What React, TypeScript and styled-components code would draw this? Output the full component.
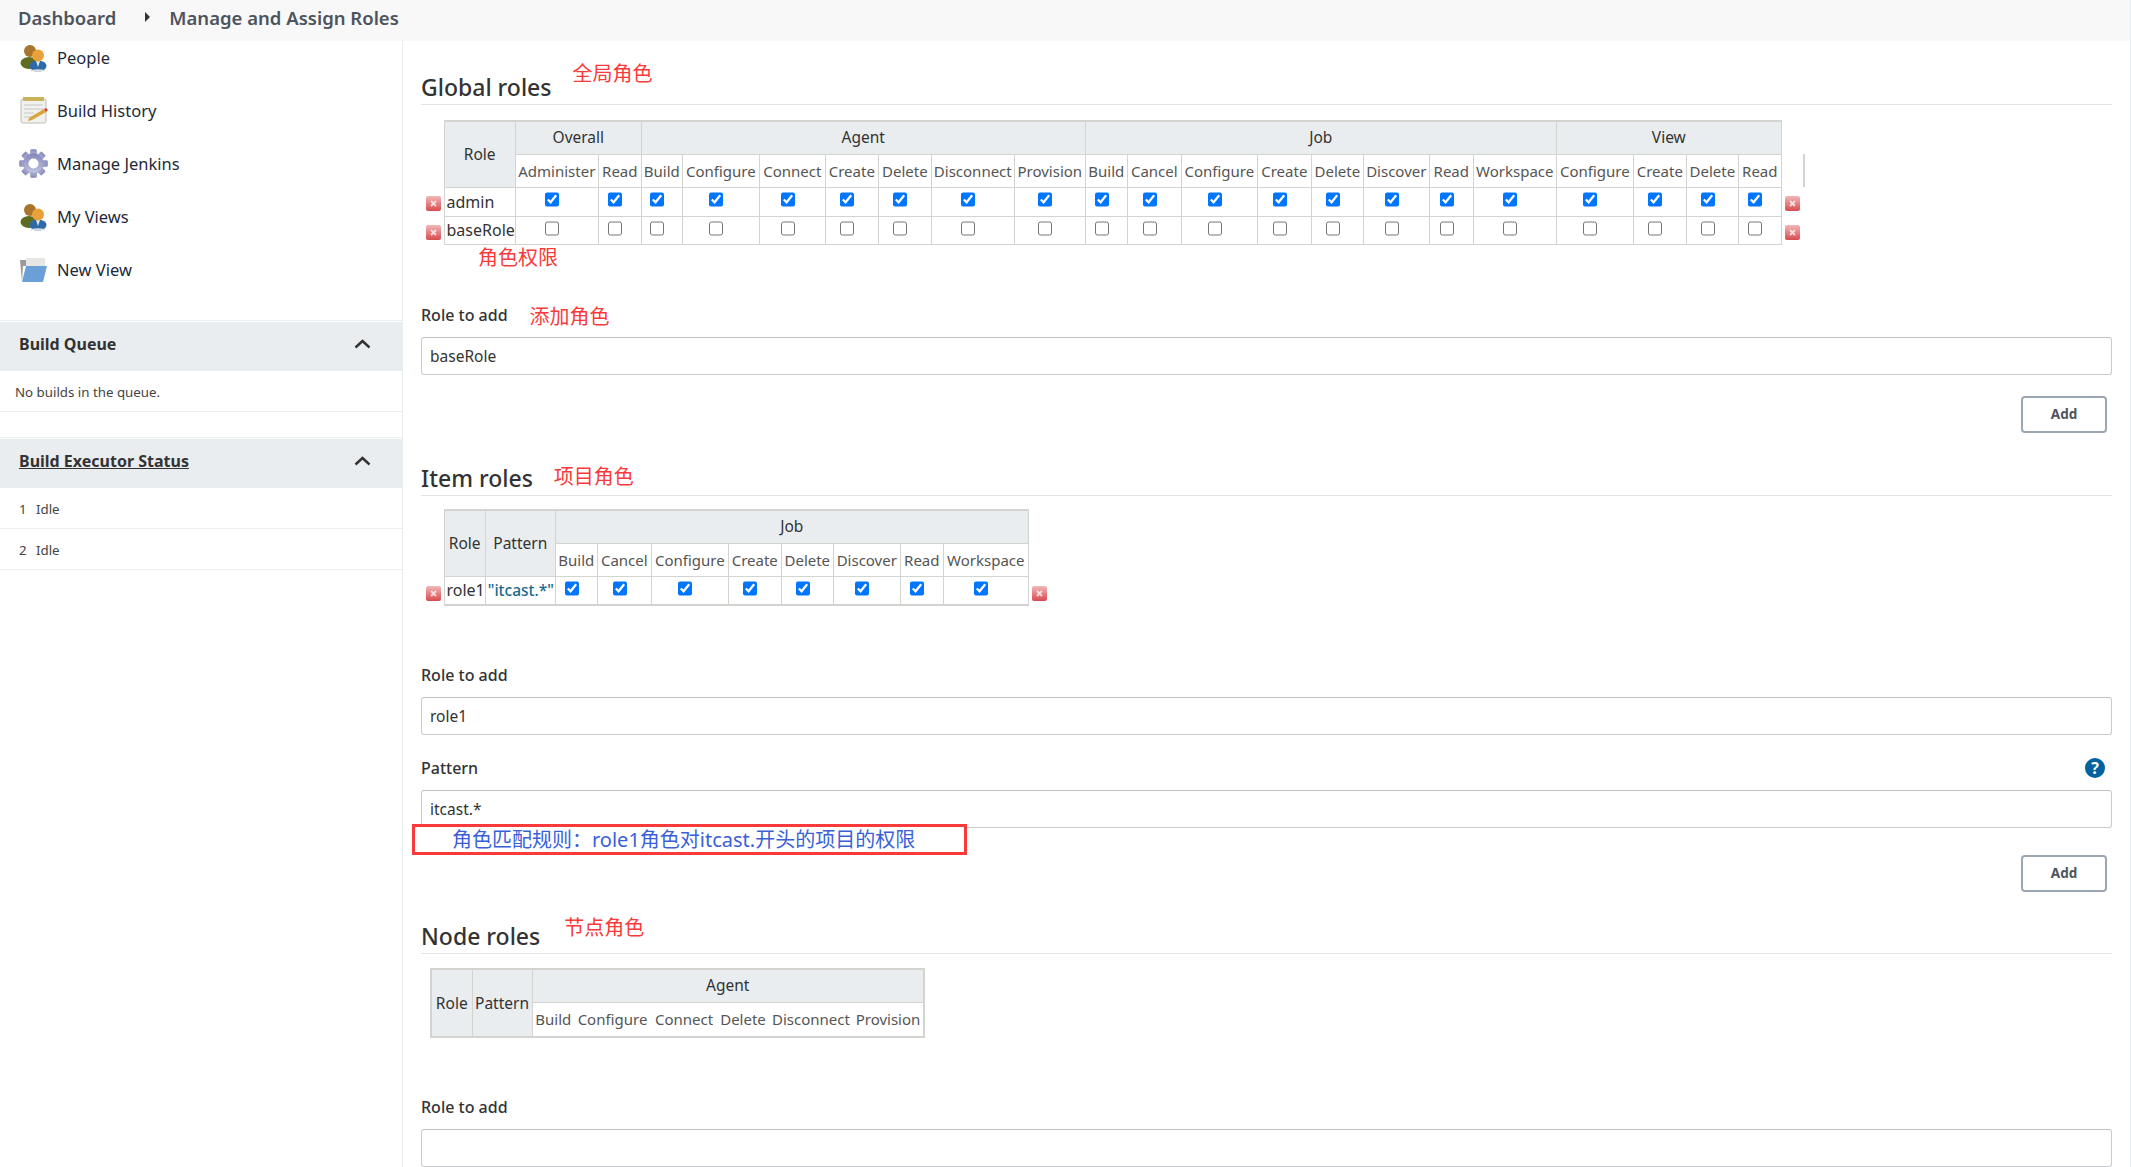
import React from "react";
import styled, { createGlobalStyle } from "styled-components";

const FONT = `"Noto Sans", "Noto Sans CJK SC", sans-serif`;
const LINE = "#d3d4cf";
const HEAD_BG = "#e9edf0";

const GlobalStyle = createGlobalStyle`
  html, body { margin: 0; padding: 0; background: #fff; }
  body { font-family: ${FONT}; color: #333; }
`;

const Page = styled.div`
  width: 2131px;
  height: 1167px;
  overflow: hidden;
  display: flex;
  flex-direction: column;
  border-right: 1px solid #e8eef0;
  box-sizing: border-box;
`;

const TopBar = styled.header`
  flex: none;
  position: relative;
  z-index: 2;
  height: 41px;
  background: #f8f8f8;
  display: flex;
  align-items: center;
  padding: 0 0 7px 18px;
  box-sizing: border-box;
  font-size: 18.5px;
  font-weight: 600;
  color: #4d545d;
`;

const Crumb = styled.span`
  white-space: nowrap;
`;

const CrumbArrow = styled.span`
  width: 0;
  height: 0;
  margin: 0 19px 0 29px;
  border-left: 5px solid #333;
  border-top: 5px solid transparent;
  border-bottom: 5px solid transparent;
`;

const Body = styled.div`
  flex: 1;
  display: flex;
  min-height: 0;
`;

const Sidebar = styled.aside`
  flex: none;
  width: 403px;
  box-sizing: border-box;
  border-right: 1px solid #e8eef0;
`;

const Tasks = styled.nav`
  margin-top: -10px;
  margin-bottom: 24px;
`;

const Task = styled.a`
  display: flex;
  align-items: center;
  gap: 9px;
  height: 53px;
  padding-left: 19px;
  font-size: 16.5px;
  color: #1d2a3a;
`;

const TaskIcon = styled.svg`
  flex: none;
  width: 29px;
  height: 29px;
`;

const Panel = styled.section`
  border-top: 1px solid #e9eef0;
  margin-bottom: 25px;
`;

const PanelHead = styled.div`
  margin-top: 1px;
  height: 49px;
  box-sizing: border-box;
  background: ${HEAD_BG};
  display: flex;
  align-items: center;
  justify-content: space-between;
  padding: 0 31px 5px 19px;
`;

const PanelTitle = styled.span<{ $link?: boolean }>`
  font-size: 16px;
  font-weight: 700;
  color: #333;
  text-decoration: ${(p) => (p.$link ? "underline" : "none")};
`;

const PanelRow = styled.div`
  display: flex;
  align-items: center;
  height: 41px;
  padding-top: 2px;
  box-sizing: border-box;
  border-bottom: 1px solid #e9eef0;
  font-size: 13.3px;
  color: #444;
`;

const QueueText = styled.span`
  padding-left: 15px;
`;

const ExecNum = styled.span`
  width: 36px;
  padding-left: 19px;
  box-sizing: border-box;
`;

const Main = styled.main`
  flex: 1;
  min-width: 0;
  padding: 0 18px;
`;

const SectionHead = styled.div<{ $top: number }>`
  display: flex;
  align-items: flex-end;
  height: 32px;
  margin-top: ${(p) => p.$top}px;
  border-bottom: 1px solid #e2e3e3;
`;

const SectionTitle = styled.h2`
  margin: 0 0 1px;
  font-size: 23px;
  font-weight: 500;
  line-height: 32px;
  color: #333;
  white-space: nowrap;
`;

const Note = styled.span<{ $left: number; $lift?: number }>`
  margin-left: ${(p) => p.$left}px;
  font-size: 20px;
  line-height: 24px;
  color: #f93a3a;
  white-space: nowrap;
  transform: translateY(${(p) => -(p.$lift ?? 0)}px);
`;

const Table = styled.table<{ $indent?: number; $top: number; $framed?: boolean }>`
  table-layout: fixed;
  border-collapse: collapse;
  margin: ${(p) => p.$top}px 0 0 ${(p) => p.$indent ?? 0}px;
  border: ${(p) => (p.$framed ? `2px solid ${LINE}` : "none")};
  font-size: 15.5px;
  color: #333;
`;

const Col = styled.col<{ $w: number }>`
  width: ${(p) => p.$w}px;
`;

const Row = styled.tr<{ $h: number }>`
  height: ${(p) => p.$h}px;
`;

const GroupCell = styled.th`
  padding: 0 0 2px;
  background: ${HEAD_BG};
  border: 1px solid ${LINE};
  border-top-width: 2px;
  font-weight: 400;
  white-space: nowrap;
`;

const SpanCell = styled(GroupCell)`
  padding: 0;
`;

const SubCell = styled.th<{ $plain?: boolean }>`
  padding: 0;
  background: #fff;
  border: 1px solid ${LINE};
  border-left-style: ${(p) => (p.$plain ? "none" : "solid")};
  border-right-style: ${(p) => (p.$plain ? "none" : "solid")};
  font-weight: 400;
  font-size: 15px;
  color: #555;
  white-space: nowrap;
`;

const TrailCell = styled.th`
  padding: 0;
  border-right: 2px solid ${LINE};
`;

const BlankCell = styled.th`
  padding: 0;
`;

const NameCell = styled.td<{ $foot?: boolean }>`
  padding: 0 0 0 2px;
  border: 1px solid ${LINE};
  border-bottom-width: ${(p) => (p.$foot ? 2 : 1)}px;
  font-size: 16px;
  white-space: nowrap;
`;

const PatternValue = styled.span`
  color: #1a6a8c;
  font-size: 15.5px;
  font-weight: 500;
`;

const BoxCell = styled.td<{ $foot?: boolean }>`
  padding: 4px 9px 0 0;
  border: 1px solid ${LINE};
  border-bottom-width: ${(p) => (p.$foot ? 2 : 1)}px;
  text-align: center;
  vertical-align: top;
  line-height: 0;
`;

const Box = styled.input`
  width: 14px;
  height: 15px;
  margin: 0;
`;

const DeleteCell = styled.td<{ $side: "left" | "right" }>`
  padding: 9px 0 0 ${(p) => (p.$side === "left" ? 5 : 3)}px;
  vertical-align: top;
  line-height: 0;
`;

const DeleteIcon = styled.svg`
  width: 15px;
  height: 15px;
`;

const TableNote = styled.div`
  height: 24px;
  margin: 1px 0 0 57px;
  font-size: 20px;
  line-height: 24px;
  color: #f93a3a;
`;

const Field = styled.div<{ $top: number }>`
  position: relative;
  margin-top: ${(p) => p.$top}px;
`;

const LabelRow = styled.div`
  display: flex;
  align-items: center;
  justify-content: space-between;
  height: 24px;
  margin-bottom: 10px;
`;

const LabelGroup = styled.div`
  display: flex;
  align-items: center;
`;

const Label = styled.label`
  font-size: 16px;
  font-weight: 500;
  color: #333;
`;

const HelpBadge = styled.span`
  width: 20px;
  height: 20px;
  margin-right: 7px;
  border-radius: 50%;
  background: #00629e;
  color: #fff;
  font-size: 16px;
  font-weight: 700;
  line-height: 20px;
  text-align: center;
`;

const TextInput = styled.input`
  display: block;
  width: 100%;
  height: 38px;
  box-sizing: border-box;
  padding: 0 8px;
  border: 1px solid #c8cccf;
  border-top-color: #bdc1c4;
  border-radius: 3px;
  outline: none;
  background: #fff;
  font-family: ${FONT};
  font-size: 15.5px;
  color: #333;
`;

const ButtonRow = styled.div<{ $top: number }>`
  display: flex;
  justify-content: flex-end;
  margin-top: ${(p) => p.$top}px;
  padding-right: 5px;
`;

const AddButton = styled.button`
  width: 86px;
  height: 37px;
  box-sizing: border-box;
  border: 2px solid #9aa7b2;
  border-radius: 4px;
  background: #fff;
  font-family: ${FONT};
  font-size: 13.5px;
  font-weight: 700;
  color: #4d545d;
`;

const RuleBox = styled.div`
  position: absolute;
  left: -9px;
  top: 68px;
  width: 555px;
  height: 31px;
  box-sizing: border-box;
  display: flex;
  align-items: center;
  padding: 0 0 2px 37px;
  border: 3px solid #f93a3a;
  background: #fff;
  font-size: 20px;
  color: #3a5fd9;
  white-space: nowrap;
`;

const chevron = (
  <svg width="17" height="10" viewBox="0 0 17 10" fill="none">
    <path d="M1.5 8.5 8.5 2l7 6.5" stroke="#333" strokeWidth="2.4" />
  </svg>
);

const PeopleGlyph = () => (
  <TaskIcon viewBox="0 0 29 29">
    <ellipse cx="10" cy="20" rx="8.5" ry="6" fill="#5f6b1e" />
    <circle cx="11" cy="8" r="6" fill="#a8742c" />
    <ellipse cx="19" cy="23" rx="8.5" ry="5.5" fill="#2f6aa8" />
    <path d="M17 18h4l-2 6z" fill="#dfe7ef" />
    <circle cx="19" cy="12.5" r="6" fill="#e9a23b" />
    <ellipse cx="19" cy="27.5" rx="8" ry="1.2" fill="#d9dde0" />
  </TaskIcon>
);

const NotepadGlyph = () => (
  <TaskIcon viewBox="0 0 29 29">
    <rect x="2" y="3" width="25" height="24" rx="2" fill="#f1f1ee" stroke="#bdbdb8" />
    <rect x="4" y="1" width="21" height="4" fill="#c9b45c" />
    <path d="M5 9h19M5 13h19M5 17h10M5 21h8" stroke="#c6c6c6" />
    <path d="m10 22 15-9 2 3-14 8-4 1z" fill="#d9a53a" />
    <path d="m25 13 2-1 2 2-2 2z" fill="#d8432f" />
  </TaskIcon>
);

const GearGlyph = () => (
  <TaskIcon viewBox="0 0 29 29">
    <defs>
      <linearGradient id="gear" x1="0" y1="0" x2="0" y2="1">
        <stop offset="0" stopColor="#8488bb" />
        <stop offset="1" stopColor="#c3c4de" />
      </linearGradient>
    </defs>
    <g fill="url(#gear)" stroke="#8388b6" strokeWidth=".5">
      {[0, 45, 90, 135, 180, 225, 270, 315].map((a) => (
        <rect key={a} x="11.5" y="0.5" width="6" height="7" rx="1" transform={`rotate(${a} 14.5 14.5)`} />
      ))}
      <circle cx="14.5" cy="14.5" r="10" />
    </g>
    <circle cx="14.5" cy="14.5" r="5" fill="#fff" />
  </TaskIcon>
);

const FolderGlyph = () => (
  <TaskIcon viewBox="0 0 29 29">
    <path d="M1 5h6l1-2h17v8H4l-1 16z" fill="#9a9a98" />
    <rect x="7" y="3" width="19" height="9" fill="#e6e6e4" />
    <path d="M7 11h21l-4 16H3z" fill="#6b9fd8" />
  </TaskIcon>
);

const Delete = () => (
  <DeleteIcon viewBox="0 0 15 15">
    <defs>
      <linearGradient id="del" x1="0" y1="0" x2="0" y2="1">
        <stop offset="0" stopColor="#f2b8b8" />
        <stop offset="1" stopColor="#d84a4f" />
      </linearGradient>
    </defs>
    <rect width="15" height="15" rx="2" fill="url(#del)" />
    <path d="m5 5 5 5m0-5-5 5" stroke="#f6dede" strokeWidth="1.8" />
  </DeleteIcon>
);

type Group = { name: string; perms: string[] };
type RoleRow = { name: string; pattern?: string; checked: boolean };

const widths = (edges: number[]) => edges.slice(1).map((e, i) => e - edges[i]);

const GLOBAL_EDGES = [421, 444, 514, 597, 640, 681, 758, 824, 877, 930, 1013, 1084, 1126, 1180, 1256, 1310, 1362, 1428, 1472, 1555, 1632, 1685, 1737, 1780, 1803];
const ITEM_EDGES = [421, 444, 485, 555, 597, 651, 728, 781, 833, 900, 943, 1028, 1051];
const NODE_EDGES = [430, 471, 531, 573, 650, 716, 768, 852, 923];

const JOB = ["Build", "Cancel", "Configure", "Create", "Delete", "Discover", "Read", "Workspace"];

const GLOBAL_GROUPS: Group[] = [
  { name: "Overall", perms: ["Administer", "Read"] },
  { name: "Agent", perms: ["Build", "Configure", "Connect", "Create", "Delete", "Disconnect", "Provision"] },
  { name: "Job", perms: JOB },
  { name: "View", perms: ["Configure", "Create", "Delete", "Read"] },
];

const RoleRows = ({ rows, count, foot }: { rows: RoleRow[]; count: number; foot?: boolean }) => (
  <tbody>
    {rows.map((row, r) => (
      <Row key={row.name} $h={r === 0 && !foot ? 29 : 28}>
        <DeleteCell $side="left">
          <Delete />
        </DeleteCell>
        <NameCell $foot={foot}>{row.name}</NameCell>
        {row.pattern && (
          <NameCell $foot={foot}>
            <PatternValue>{row.pattern}</PatternValue>
          </NameCell>
        )}
        {Array.from({ length: count }).map((_, i) => (
          <BoxCell key={i} $foot={foot}>
            <Box type="checkbox" checked={row.checked} readOnly />
          </BoxCell>
        ))}
        <DeleteCell $side="right">
          <Delete />
        </DeleteCell>
      </Row>
    ))}
  </tbody>
);

const App = () => (
  <Page>
    <GlobalStyle />
    <TopBar>
      <Crumb>Dashboard</Crumb>
      <CrumbArrow />
      <Crumb>Manage and Assign Roles</Crumb>
    </TopBar>
    <Body>
      <Sidebar>
        <Tasks>
          <Task><PeopleGlyph />People</Task>
          <Task><NotepadGlyph />Build History</Task>
          <Task><GearGlyph />Manage Jenkins</Task>
          <Task><PeopleGlyph />My Views</Task>
          <Task><FolderGlyph />New View</Task>
        </Tasks>
        <Panel>
          <PanelHead>
            <PanelTitle>Build Queue</PanelTitle>
            {chevron}
          </PanelHead>
          <PanelRow>
            <QueueText>No builds in the queue.</QueueText>
          </PanelRow>
        </Panel>
        <Panel>
          <PanelHead>
            <PanelTitle $link>Build Executor Status</PanelTitle>
            {chevron}
          </PanelHead>
          <PanelRow><ExecNum>1</ExecNum>Idle</PanelRow>
          <PanelRow><ExecNum>2</ExecNum>Idle</PanelRow>
        </Panel>
      </Sidebar>
      <Main>
        <SectionHead $top={31}>
          <SectionTitle>Global roles</SectionTitle>
          <Note $left={21} $lift={18}>全局角色</Note>
        </SectionHead>
        <Table $top={15}>
          <colgroup>
            {widths(GLOBAL_EDGES).map((w, i) => <Col key={i} $w={w} />)}
          </colgroup>
          <thead>
            <Row $h={33}>
              <BlankCell />
              <SpanCell rowSpan={2}>Role</SpanCell>
              {GLOBAL_GROUPS.map((g) => (
                <GroupCell key={g.name} colSpan={g.perms.length}>{g.name}</GroupCell>
              ))}
              <BlankCell />
            </Row>
            <Row $h={33}>
              <BlankCell />
              {GLOBAL_GROUPS.flatMap((g) => g.perms).map((p, i) => (
                <SubCell key={i}>{p}</SubCell>
              ))}
              <TrailCell />
            </Row>
          </thead>
          <RoleRows
            count={21}
            rows={[
              { name: "admin", checked: true },
              { name: "baseRole", checked: false },
            ]}
          />
        </Table>
        <TableNote>角色权限</TableNote>
        <Field $top={33}>
          <LabelRow>
            <LabelGroup>
              <Label>Role to add</Label>
              <Note $left={22} $lift={-2}>添加角色</Note>
            </LabelGroup>
          </LabelRow>
          <TextInput defaultValue="baseRole" />
        </Field>
        <ButtonRow $top={21}>
          <AddButton>Add</AddButton>
        </ButtonRow>

        <SectionHead $top={30}>
          <SectionTitle>Item roles</SectionTitle>
          <Note $left={21} $lift={6}>项目角色</Note>
        </SectionHead>
        <Table $top={13}>
          <colgroup>
            {widths(ITEM_EDGES).map((w, i) => <Col key={i} $w={w} />)}
          </colgroup>
          <thead>
            <Row $h={34}>
              <BlankCell />
              <SpanCell rowSpan={2}>Role</SpanCell>
              <SpanCell rowSpan={2}>Pattern</SpanCell>
              <GroupCell colSpan={8}>Job</GroupCell>
              <BlankCell />
            </Row>
            <Row $h={33}>
              <BlankCell />
              {JOB.map((p) => <SubCell key={p}>{p}</SubCell>)}
              <BlankCell />
            </Row>
          </thead>
          <RoleRows foot count={8} rows={[{ name: "role1", pattern: '"itcast.*"', checked: true }]} />
        </Table>
        <Field $top={57}>
          <LabelRow>
            <LabelGroup>
              <Label>Role to add</Label>
            </LabelGroup>
          </LabelRow>
          <TextInput defaultValue="role1" />
        </Field>
        <Field $top={21}>
          <LabelRow>
            <LabelGroup>
              <Label>Pattern</Label>
            </LabelGroup>
            <HelpBadge>?</HelpBadge>
          </LabelRow>
          <TextInput defaultValue="itcast.*" />
          <RuleBox>角色匹配规则：role1角色对itcast.开头的项目的权限</RuleBox>
        </Field>
        <ButtonRow $top={27}>
          <AddButton>Add</AddButton>
        </ButtonRow>

        <SectionHead $top={29}>
          <SectionTitle>Node roles</SectionTitle>
          <Note $left={24} $lift={13}>节点角色</Note>
        </SectionHead>
        <Table $top={14} $indent={9} $framed>
          <colgroup>
            {widths(NODE_EDGES).map((w, i) => <Col key={i} $w={w} />)}
          </colgroup>
          <thead>
            <Row $h={34}>
              <SpanCell rowSpan={2}>Role</SpanCell>
              <SpanCell rowSpan={2}>Pattern</SpanCell>
              <GroupCell colSpan={6}>Agent</GroupCell>
            </Row>
            <Row $h={34}>
              {["Build", "Configure", "Connect", "Delete", "Disconnect", "Provision"].map((p) => (
                <SubCell key={p} $plain>{p}</SubCell>
              ))}
            </Row>
          </thead>
        </Table>
        <Field $top={57}>
          <LabelRow>
            <LabelGroup>
              <Label>Role to add</Label>
            </LabelGroup>
          </LabelRow>
          <TextInput />
        </Field>
      </Main>
    </Body>
  </Page>
);

export default App;
